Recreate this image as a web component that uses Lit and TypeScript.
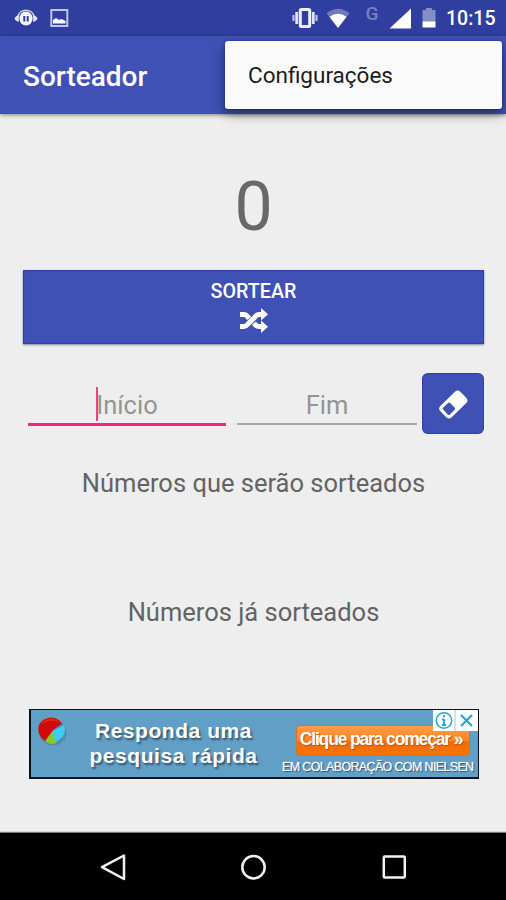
import { LitElement, html, css, svg } from "lit";
import { customElement, property } from "lit/decorators.js";

@customElement("status-bar")
class StatusBar extends LitElement {
  static styles = css`
    :host { display: flex; align-items: center; height: 36px; background: #303f9f; color: #fff; padding: 0 11px 0 14px; }
    svg { display: block; flex: none; }
    .spacer { flex: 1; }
    .time { font: 500 19.5px/36px Roboto, sans-serif; width: 49px; white-space: nowrap; padding-top: 2px; }
  `;
  render() {
    return html`
      <svg width="60" height="36" viewBox="14 0 60 36">
        <path d="M18 17c1-9 15-9 16 0" fill="none" stroke="#c9cee9" stroke-width="1.500" />
        <ellipse cx="26" cy="18.500" rx="6.600" ry="7" fill="#f4f5fb" />
        <path d="M18.800 15c-5.500 2-5.500 5 0 7zM33.200 15c5.500 2 5.500 5 0 7z" fill="#e3e6f5" />
        <path d="M24.300 16v5.500M27.700 16v5.500" stroke="#303f9f" stroke-width="2" />
        <rect x="51.300" y="10" width="16" height="16" fill="none" stroke="#bfc5e5" stroke-width="2" />
        <path d="M53 23.500v-3.500l3-2 3 2 2.500-1 4 2v2.500z" fill="#fff" />
      </svg>
      <div class="spacer"></div>
      <svg width="154" height="36" viewBox="292 0 154 36">
        <rect x="300.300" y="9.500" width="9.400" height="17" rx="1" fill="none" stroke="#eef0f9" stroke-width="3" />
        <path d="M296.700 12v12M313.300 12v12" stroke="#dfe2f3" stroke-width="2.800" />
        <path d="M293.500 15v6M316.500 15v6" stroke="#b9c0e3" stroke-width="2.200" />
        <path d="M326.500 13.200q11.500-9 23 0L338 28z" fill="#7079bc" />
        <path d="M329.500 16.800q8.500-6 17 0L338 28z" fill="#fff" />
        <text x="365.500" y="19.700" font-family="Roboto, sans-serif" font-size="19" font-weight="500" fill="#7780bf">G</text>
        <path d="M411 8.500V28.500H389.500z" fill="#fff" />
        <path d="M422.500 10h3.500V8h6v2h3.500v12h-13z" fill="#858dc7" />
        <path d="M422.500 21.500h13v6h-13z" fill="#fff" />
      </svg>
      <div class="time">10:15</div>
    `;
  }
}

@customElement("number-field")
class NumberField extends LitElement {
  @property() hint = "";
  @property({ type: Boolean, reflect: true }) focused = false;
  static styles = css`
    :host { display: flex; justify-content: center; box-sizing: border-box; height: 52px; border-bottom: 2px solid #a9a9a9; color: #949494; font: 25.500px/65px Roboto, sans-serif; }
    :host([focused]) { height: 53px; border-bottom: 3px solid #f0287a; }
    .hint { position: relative; }
    .caret { position: absolute; left: 0; top: 14px; width: 2px; height: 34px; background: #f0407f; }
  `;
  render() {
    return html`<span class="hint">${this.hint}${this.focused ? html`<i class="caret"></i>` : null}</span>`;
  }
}

@customElement("ad-banner")
class AdBanner extends LitElement {
  static styles = css`
    :host { display: flex; box-sizing: border-box; position: relative; width: 450px; height: 70px; border: solid #07131c; border-width: 1px 1px 2px 2px; background: #629fc7; color: #fff; font-family: "Liberation Sans", Arial, sans-serif; }
    svg { display: block; }
    .logo { width: 34px; padding: 7px 0 0 6px; flex: none; }
    .headline { width: 205px; margin-top: 8px; text-align: center; font-weight: 700; font-size: 21px; line-height: 25px; letter-spacing: 0.55px; text-shadow: 1.500px 1.500px 2px #31526b; white-space: nowrap; }
    .side { position: absolute; left: 251px; top: 15px; width: 194px; }
    .cta { box-sizing: border-box; margin-left: 14px; padding-right: 4px; width: 174px; height: 31px; border: 1px solid #c97535; border-radius: 4px; background: linear-gradient(#ff9c48, #ff8420 50%, #f56b00 55%, #f77408); text-align: center; font-weight: 700; font-size: 17.500px; line-height: 27px; letter-spacing: -1.150px; white-space: nowrap; text-shadow: 1px 1px 1px #a85a20; }
    .credit { margin-top: 3px; font-size: 12.500px; line-height: 16px; letter-spacing: -0.65px; white-space: nowrap; text-shadow: 1px 1px 1px #31526b, 0 0 1px #fff; }
    .choices { position: absolute; right: 0; top: 0; background: #fff; }
  `;
  render() {
    return html`
      <div class="logo">
        <svg width="30" height="29" viewBox="0 0 30 29">
          <ellipse cx="16" cy="16" rx="13.500" ry="12.500" fill="#47799a" opacity=".55" />
          <path d="M15 14.500L27 8q3 10-5 15l-4 3z" fill="#3ccdf5" />
          <path d="M15 14.500L19 26q-7 2.500-11-2z" fill="#86cc20" />
          <path d="M16 13L8 24Q-1 17 2 8C6-1 20-2 25 6.500z" fill="#d20a0a" />
          <path d="M4 8c4-7 14-8 19-2-7-4-13-3-19 2z" fill="#e0301c" />
        </svg>
      </div>
      <div class="headline">Responda uma<br />pesquisa rápida</div>
      <div class="side">
        <div class="cta">Clique para começar »</div>
        <div class="credit">EM COLABORAÇÃO COM NIELSEN</div>
      </div>
      <svg class="choices" width="45" height="21" viewBox="0 0 45 21">
        <path d="M22 0v21" stroke="#9fc4dc" />
        <circle cx="11" cy="10.500" r="7.700" fill="none" stroke="#23a5cd" stroke-width="1.500" />
        <path d="M11 9v6M9 9.500h2M9 15h4M11 5v2.300" stroke="#23a5cd" stroke-width="1.900" />
        <path d="M28 5l11 11M39 5L28 16" stroke="#23a5cd" stroke-width="2.100" />
      </svg>
    `;
  }
}

@customElement("app-root")
class AppRoot extends LitElement {
  static styles = css`
    :host { display: flex; flex-direction: column; width: 506px; height: 900px; background: #eee; font-family: Roboto, sans-serif; position: relative; overflow: hidden; }
    svg { display: block; }
    .appbar { height: 78px; flex: none; background: #3f51b5; box-shadow: 0 1px 4px rgba(0, 0, 0, 0.45); color: #fff; padding-left: 23px; font-weight: 500; font-size: 28px; line-height: 81px; }
    .menu { position: absolute; left: 225px; top: 41px; width: 277px; height: 68px; box-sizing: border-box; padding-left: 23px; border-radius: 3px; background: #fafafa; color: #1c1c1c; font-size: 22.500px; line-height: 69px; box-shadow: 0 0 2px rgba(0, 20, 130, 0.8), 0 5px 12px rgba(0, 0, 0, 0.45); }
    main { flex: 1; display: flex; flex-direction: column; padding: 0 22px 0 23px; }
    .result { margin-top: 53px; height: 79px; line-height: 80px; font-size: 68px; color: #696969; text-align: center; }
    .draw { margin-top: 24px; height: 74px; box-sizing: border-box; padding-top: 9px; background: #3f51b5; color: #fff; box-shadow: 0 1px 2px rgba(0, 40, 60, 0.5), inset 0 0 1px 1px rgba(20, 40, 170, 0.4); display: flex; flex-direction: column; align-items: center; font-weight: 500; font-size: 19.700px; line-height: 26px; }
    .draw svg { margin-top: 3px; }
    .range { margin-top: 29px; height: 61px; display: grid; grid-template-columns: 198px 11px 180px 5px 62px; padding-left: 5px; width: 461px; box-sizing: border-box; }
    .start { grid-column: 1; }
    .end { grid-column: 3; }
    .erase { grid-column: 5; height: 61px; border-radius: 6px; background: #3f51b5; box-shadow: inset 0 0 1px 1px rgba(20, 40, 170, 0.4); display: flex; align-items: center; justify-content: center; }
    .label { height: 30px; line-height: 30px; font-size: 25.500px; color: #636363; text-align: center; }
    .upcoming { margin-top: 34px; }
    .drawn { margin-top: 99px; }
    .ad { margin: 82px 0 0 6px; }
    nav { height: 67px; flex: none; background: #000; box-shadow: 0 -1px 1px rgba(0, 0, 0, 0.5); display: grid; grid-template-columns: repeat(3, 140.500px); justify-content: center; justify-items: center; align-items: center; }
  `;

  private navIcon(shape: unknown) {
    return html`<svg width="32" height="32" viewBox="0 0 32 32" fill="none" stroke="#f2f2f2" stroke-width="2.500" stroke-linejoin="round">${shape}</svg>`;
  }

  render() {
    return html`
      <status-bar></status-bar>
      <header class="appbar">Sorteador</header>
      <main>
        <div class="result">0</div>
        <div class="draw">
          SORTEAR
          <svg width="30" height="26" viewBox="0 0 30 26">
            <g fill="none" stroke="#fff" stroke-width="5">
              <path d="M1 6.500h4q2 0 4 2.500l1 1.500M1 18.500h4q2 0 4-2.500l7-7q2-2.500 4-2.500h3M15 15l1.500 2q1.500 1.500 3.500 1.500h3" />
            </g>
            <path d="M22 0l7 6.300-7 6.200zM22 12.500l7 6.200-7 6.300z" fill="#fff" />
          </svg>
        </div>
        <div class="range">
          <number-field class="start" hint="Início" focused></number-field>
          <number-field class="end" hint="Fim"></number-field>
          <div class="erase">
            <svg width="34" height="34" viewBox="-17 -17 34 34">
              <g transform="translate(.3 .5) rotate(-44)">
                <rect x="-14" y="-8" width="28" height="16" rx="4" fill="#fff" />
                <rect x="-10.800" y="-4.800" width="9.600" height="9.600" rx="1.500" fill="#3f51b5" />
              </g>
            </svg>
          </div>
        </div>
        <div class="label upcoming">Números que serão sorteados</div>
        <div class="label drawn">Números já sorteados</div>
        <ad-banner class="ad"></ad-banner>
      </main>
      <nav>
        ${this.navIcon(svg`<path d="M27 4.500v23.500L5 16.200z" />`)}
        ${this.navIcon(svg`<circle cx="16.500" cy="16.200" r="11.200" />`)}
        ${this.navIcon(svg`<rect x="5.800" y="5.500" width="21" height="21" rx="1" />`)}
      </nav>
      <div class="menu">Configurações</div>
    `;
  }
}
